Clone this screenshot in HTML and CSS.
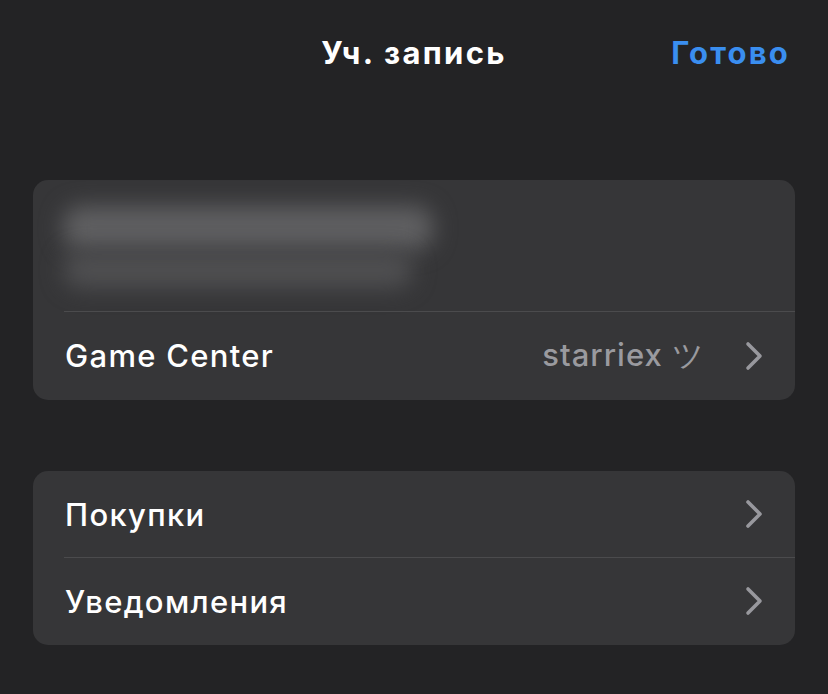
FILE: index.html
```html
<!DOCTYPE html>
<html lang="ru">
<head>
<meta charset="utf-8">
<link rel="stylesheet" href="styles.css">
</head>
<body>
<div class="screen">
  <header class="nav">
    <div class="nav-title">Уч. запись</div>
    <div class="nav-done">Готово</div>
  </header>

  <section class="card card-account">
    <div class="blur-area">
      <div class="blur-line blur-line-1"></div>
      <div class="blur-line blur-line-2"></div>
    </div>
    <div class="row">
      <span class="row-label">Game Center</span>
      <span class="row-value">starriex ツ</span>
      <svg class="chev" width="18" height="30" viewBox="0 0 18 30"><path d="M3 3 L15 15 L3 27" fill="none" stroke="currentColor" stroke-width="3.6" stroke-linecap="round" stroke-linejoin="round"/></svg>
    </div>
  </section>

  <section class="card card-list">
    <div class="row row-a">
      <span class="row-label">Покупки</span>
      <svg class="chev" width="18" height="30" viewBox="0 0 18 30"><path d="M3 3 L15 15 L3 27" fill="none" stroke="currentColor" stroke-width="3.6" stroke-linecap="round" stroke-linejoin="round"/></svg>
    </div>
    <div class="row row-b">
      <span class="row-label">Уведомления</span>
      <svg class="chev" width="18" height="30" viewBox="0 0 18 30"><path d="M3 3 L15 15 L3 27" fill="none" stroke="currentColor" stroke-width="3.6" stroke-linecap="round" stroke-linejoin="round"/></svg>
    </div>
  </section>
</div>
</body>
</html>
```

FILE: styles.css
```css
html, body {
  margin: 0;
  padding: 0;
  background: #232325;
}
body {
  font-family: Inter, "Noto Sans", "Liberation Sans", sans-serif;
  color: #ffffff;
  width: 828px;
  height: 694px;
  overflow: hidden;
}
.screen {
  padding: 0 33px;
}
.nav {
  position: relative;
  height: 180px;
  box-sizing: border-box;
  padding-top: 35px;
  display: flex;
  justify-content: center;
}
.nav-title {
  font-size: 31px;
  font-weight: 700;
  line-height: 36px;
  letter-spacing: 2.3px;
}
.nav-done {
  position: absolute;
  right: 5px;
  top: 35px;
  font-size: 31px;
  font-weight: 700;
  line-height: 36px;
  letter-spacing: 2.2px;
  color: #3a8ef0;
}
.card {
  background: #363638;
  border-radius: 15px;
  overflow: hidden;
}
.card-list {
  margin-top: 71px;
}
.blur-area {
  height: 131px;
  box-sizing: border-box;
  padding: 26px 0 0 30px;
  position: relative;
}
.blur-line {
  border-radius: 18px;
  filter: blur(11px);
}
.blur-line-1 {
  width: 370px;
  height: 44px;
  background: #5f5f61;
}
.blur-line-2 {
  width: 350px;
  height: 36px;
  margin-top: 2px;
  background: #4f4f51;
}
.row {
  display: flex;
  align-items: center;
  height: 88px;
  padding: 0 32px 0 32px;
  position: relative;
}
.card-account .row::before,
.row-b::before {
  content: "";
  position: absolute;
  left: 31px;
  right: 0;
  top: 0;
  height: 1px;
  background: #4b4b4d;
}
.card-account .row {
  height: 89px;
}
.row-a {
  height: 86px;
}
.row-label {
  font-size: 31px;
  font-weight: 500;
  flex: 1;
  letter-spacing: 1.3px;
}
.row-value {
  font-size: 31px;
  font-weight: 500;
  letter-spacing: 1px;
  color: #9a9a9f;
  margin-right: 40px;
}
.chev {
  color: #98989d;
  display: block;
}
```
